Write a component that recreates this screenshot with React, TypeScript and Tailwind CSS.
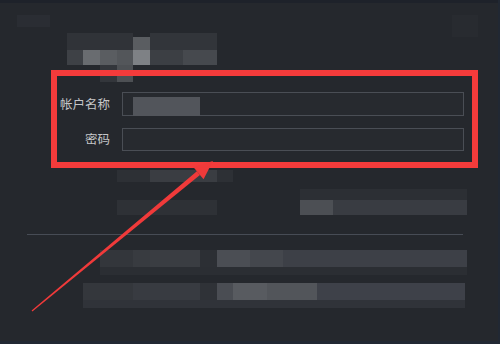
import React from "react";

type R = [number, number, number, number, string];

function Mosaic({ w, h, rects }: { w: number; h: number; rects: R[] }) {
  return (
    <svg width={w} height={h} className="block shrink-0" shapeRendering="crispEdges">
      {rects.map(([x, y, rw, rh, c], i) => (
        <rect key={i} x={x} y={y} width={rw} height={rh} fill={c} />
      ))}
    </svg>
  );
}

// top mosaic, y offset 3
const topRects: R[] = [
  [17, 12, 33, 12, "#2a2d33"],
  [67, 30, 66, 17, "#303338"],
  [133, 34, 17, 13, "#5a5d61"],
  [150, 30, 67, 17, "#32353a"],
  [67, 47, 16, 15, "#3e4146"],
  [83, 47, 17, 15, "#696c70"],
  [100, 47, 17, 15, "#5a5d61"],
  [117, 47, 16, 15, "#53565a"],
  [133, 47, 17, 15, "#7e8185"],
  [150, 47, 33, 15, "#3c3f44"],
  [183, 47, 34, 15, "#46494e"],
  [100, 62, 17, 17, "#33363b"],
  [117, 62, 16, 17, "#4d5054"],
  [452, 12, 26, 22, "#282b30"],
];

// mid mosaic, y offset 151
const midRects: R[] = [
  [117, 19, 33, 12, "#2d3035"],
  [150, 19, 67, 12, "#3a3d42"],
  [217, 19, 16, 12, "#2d3035"],
  [117, 49, 100, 15, "#2e3136"],
  [300, 38, 167, 11, "#2c2f34"],
  [300, 49, 33, 15, "#4c4f54"],
  [333, 49, 134, 15, "#393c42"],
];

// bottom mosaic, y offset 235
const botRects: R[] = [
  [100, 15, 33, 17, "#33363b"],
  [133, 15, 17, 17, "#383b40"],
  [150, 15, 50, 17, "#3a3d42"],
  [200, 15, 17, 17, "#2c2f34"],
  [217, 15, 33, 17, "#4b4e54"],
  [250, 15, 33, 17, "#44474d"],
  [283, 15, 184, 17, "#3d4047"],
  [100, 32, 367, 8, "#2b2e33"],
  [83, 48, 50, 17, "#34373c"],
  [133, 48, 67, 17, "#383b41"],
  [200, 48, 17, 17, "#2f3237"],
  [217, 48, 16, 17, "#4a4d53"],
  [233, 48, 34, 17, "#585b60"],
  [267, 48, 50, 17, "#52555a"],
  [317, 48, 148, 17, "#3e4149"],
  [83, 65, 382, 8, "#303339"],
];

export default function App() {
  const tip = [213, 161];
  const dir = [0.768, -0.64];
  const perp = [0.64, 0.768];
  const headLen = 19;
  const half = 8;
  const base = [tip[0] - headLen * dir[0], tip[1] - headLen * dir[1]];
  const tail = [32, 311];
  const pt = (p: number[], s: number) => `${p[0] + s * perp[0]},${p[1] + s * perp[1]}`;
  const shaft = [pt(tail, -0.6), pt(base, -2.4), pt(base, 2.4), pt(tail, 0.6)].join(" ");
  const head = [`${tip[0]},${tip[1]}`, pt(base, half), pt(base, -half)].join(" ");

  return (
    <div className="relative w-[500px] h-[344px] overflow-hidden bg-[#25282d] font-['Noto_Sans_CJK_SC','Noto_Sans',sans-serif] border-r-[2px] border-b-[3px] border-[#212833]">
      <div className="h-[3px] bg-[#1e222a]" />
      <Mosaic w={498} h={89} rects={topRects} />
      <div className="flex flex-col gap-[12px]">
        <div className="flex items-center h-[24px]">
          <div className="w-[110px] text-right text-[12.5px] leading-none text-[#c6c7c9]">帐户名称</div>
          <div className="ml-[12px] w-[342px] h-[24px] border border-[#4a4e55] bg-[#272a2f] flex items-start">
            <div className="ml-[10px] mt-[4px] w-[67px] h-[19px] bg-[#52555b]" />
          </div>
        </div>
        <div className="flex items-center h-[23px]">
          <div className="w-[110px] text-right text-[12.5px] leading-none text-[#c6c7c9]">密码</div>
          <div className="ml-[12px] w-[342px] h-[23px] border border-[#4a4e55] bg-[#272a2f]" />
        </div>
      </div>
      <Mosaic w={498} h={83} rects={midRects} />
      <div className="ml-[27px] w-[436px] h-px bg-[#474c55]" />
      <Mosaic w={498} h={106} rects={botRects} />

      <div className="absolute left-[51px] top-[70px] w-[427px] h-[98px] border-[6px] border-[#f43b3b]" />
      <svg className="absolute left-0 top-0" width={500} height={344}>
        <polygon points={shaft} fill="#f03a3a" />
        <polygon points={head} fill="#f03a3a" />
      </svg>
    </div>
  );
}
